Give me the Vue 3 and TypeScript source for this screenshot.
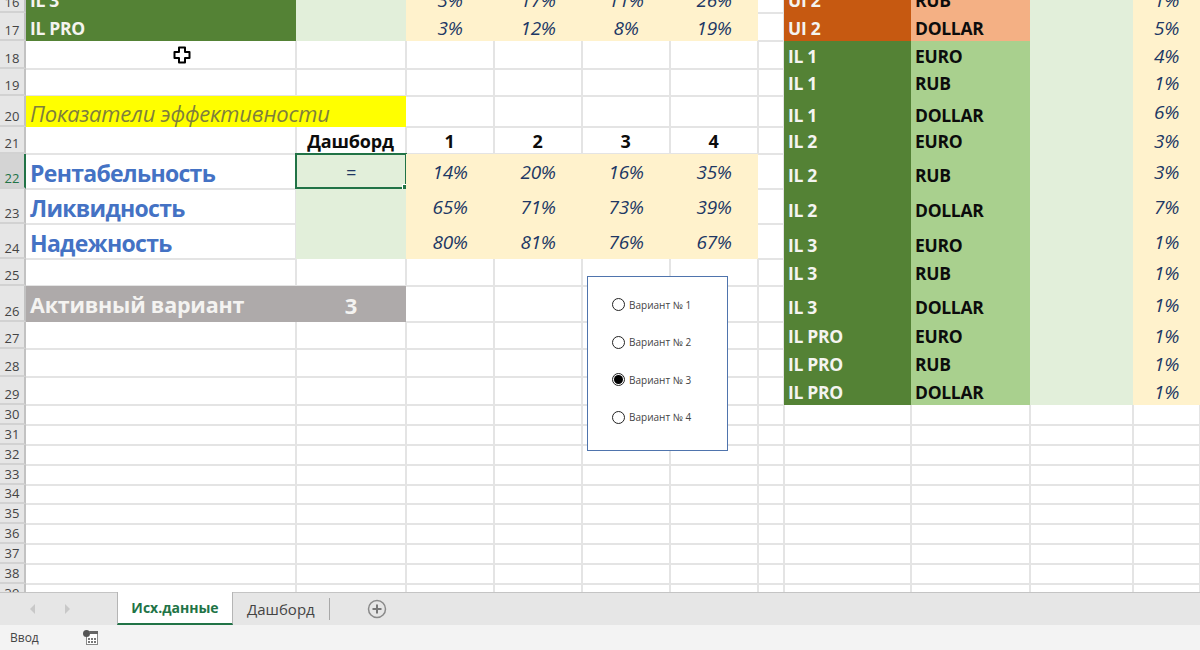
<script setup lang="ts">
interface Cell {
  text?: string;
  cls?: string;
}
interface Row {
  n: number;
  h: number;
  cells: Cell[];
}

const blank = (): Cell => ({});
const pct = (text: string): Cell => ({ text, cls: 'cream pct' });
const pctRow = (v: string[]): Cell[] => v.map(pct);

// right hand table, rows 16..29
const rightData: [string, string, string, string][] = [
  ['UI 2', 'RUB', '1%', 'orange'],
  ['UI 2', 'DOLLAR', '5%', 'orange'],
  ['IL 1', 'EURO', '4%', 'green'],
  ['IL 1', 'RUB', '1%', 'green'],
  ['IL 1', 'DOLLAR', '6%', 'green'],
  ['IL 2', 'EURO', '3%', 'green'],
  ['IL 2', 'RUB', '3%', 'green'],
  ['IL 2', 'DOLLAR', '7%', 'green'],
  ['IL 3', 'EURO', '1%', 'green'],
  ['IL 3', 'RUB', '1%', 'green'],
  ['IL 3', 'DOLLAR', '1%', 'green'],
  ['IL PRO', 'EURO', '1%', 'green'],
  ['IL PRO', 'RUB', '1%', 'green'],
  ['IL PRO', 'DOLLAR', '1%', 'green']
];

const leftData: Record<number, Cell[]> = {
  16: [{ text: 'IL 3', cls: 'dark-green label' }, { cls: 'pale' }, ...pctRow(['3%', '17%', '11%', '26%'])],
  17: [{ text: 'IL PRO', cls: 'dark-green label' }, { cls: 'pale' }, ...pctRow(['3%', '12%', '8%', '19%'])],
  20: [{ text: 'Показатели эффективности', cls: 'yellow wide' }, blank(), blank(), blank(), blank()],
  21: [blank(), { text: 'Дашборд', cls: 'head' }, { text: '1', cls: 'head' }, { text: '2', cls: 'head' }, { text: '3', cls: 'head' }, { text: '4', cls: 'head' }],
  22: [{ text: 'Рентабельность', cls: 'metric' }, { text: '=', cls: 'pale active' }, ...pctRow(['14%', '20%', '16%', '35%'])],
  23: [{ text: 'Ликвидность', cls: 'metric' }, { cls: 'pale' }, ...pctRow(['65%', '71%', '73%', '39%'])],
  24: [{ text: 'Надежность', cls: 'metric' }, { cls: 'pale' }, ...pctRow(['80%', '81%', '76%', '67%'])],
  26: [{ text: 'Активный вариант', cls: 'gray gray-label' }, { text: '3', cls: 'gray gray-num' }, blank(), blank(), blank(), blank()]
};

const heights: Record<number, number> = {
  16: 28, 17: 28, 18: 28, 19: 27, 20: 31, 21: 27, 22: 35,
  23: 35, 24: 35, 25: 27, 26: 36, 27: 27, 28: 28, 29: 28
};

const rows: Row[] = [];
for (let n = 16; n <= 39; n++) {
  const left = leftData[n] ?? [blank(), blank(), blank(), blank(), blank(), blank()];
  const r = rightData[n - 16];
  const h = heights[n] ?? 19.9;
  const low = h > 30 ? ' low' : '';
  const right: Cell[] = r
    ? [
        { text: r[0], cls: (r[3] === 'orange' ? 'dark-orange' : 'dark-green') + ' label' + low },
        { text: r[1], cls: (r[3] === 'orange' ? 'light-orange' : 'light-green') + ' code' + low },
        { cls: 'pale' },
        { text: r[2], cls: 'cream pct' }
      ]
    : [blank(), blank(), blank(), blank()];
  rows.push({ n, h, cells: [...left, blank(), ...right] });
}

const gridRows = rows.map((r) => r.h + 'px').join(' ');
const options = [
  { label: 'Вариант № 1', on: false },
  { label: 'Вариант № 2', on: false },
  { label: 'Вариант № 3', on: true },
  { label: 'Вариант № 4', on: false }
];
</script>

<template>
  <div class="app">
    <div class="sheet">
      <div class="grid" :style="{ gridTemplateRows: gridRows }">
        <template v-for="row in rows" :key="row.n">
          <div class="rowhead" :class="{ selected: row.n === 22 }">{{ row.n }}</div>
          <div v-for="(c, i) in row.cells" :key="i" class="cell" :class="c.cls">
            {{ c.text }}
            <span v-if="c.cls && c.cls.includes('active')" class="handle"></span>
          </div>
        </template>
      </div>

      <svg class="cursor" width="18" height="18" viewBox="0 0 18 18">
        <path d="M6 1.500h6v4.500h4.500v6H12v4.500H6V12H1.500V6H6z" fill="#fff" stroke="#000" stroke-width="2" stroke-linejoin="round" />
      </svg>

      <div class="form">
        <div v-for="o in options" :key="o.label" class="option">
          <span class="radio" :class="{ on: o.on }"></span>
          <span>{{ o.label }}</span>
        </div>
      </div>
    </div>

    <div class="tabs">
      <svg class="nav" width="6" height="10" viewBox="0 0 6 10"><path d="M5 0v10L0 5z" fill="#c8c8c8" /></svg>
      <svg class="nav nav2" width="6" height="10" viewBox="0 0 6 10"><path d="M1 0v10l5-5z" fill="#c8c8c8" /></svg>
      <div class="tab active-tab">Исх.данные</div>
      <div class="tab">Дашборд</div>
      <div class="sep"></div>
      <svg class="plus" width="20" height="20" viewBox="0 0 20 20">
        <circle cx="10" cy="10" r="8.500" fill="none" stroke="#8a8a8a" stroke-width="1.500" />
        <path d="M10 5.500v9M5.500 10h9" stroke="#777" stroke-width="2" />
      </svg>
    </div>

    <div class="status">
      <span class="mode">Ввод</span>
      <svg width="15" height="15" viewBox="0 0 15 15">
        <rect x="3.500" y="1.500" width="11" height="13" fill="#fff" stroke="#888" />
        <path d="M7 1h8v3H7z" fill="#666" />
        <circle cx="3.500" cy="3.500" r="3.500" fill="#555" />
        <path d="M5 8h2v2H5zM8 8h2v2H8zM11 8h2v2h-2zM5 11h2v2H5zM8 11h2v2H8zM11 11h2v2h-2z" fill="#777" />
      </svg>
    </div>
  </div>
</template>

<style>
html,
body {
  margin: 0;
  background: #fff;
}
</style>

<style scoped>
.app {
  width: 1200px;
  height: 650px;
  display: flex;
  flex-direction: column;
  overflow: hidden;
  font-family: "Open Sans", "Noto Sans", sans-serif;
}

.sheet {
  position: relative;
  height: 592px;
  flex: none;
  overflow: hidden;
}

.grid {
  display: grid;
  grid-template-columns: 27px 270px 110px 88px 88px 88px 88px 26px 127px 119px 103px 67px;
  margin: -15px 0 0 -1px;
}

.rowhead {
  background: #e6e6e6;
  border-right: 2px solid #c2c2c2;
  border-bottom: 2px solid #d2d2d2;
  box-sizing: border-box;
  display: flex;
  align-items: flex-end;
  justify-content: center;
  padding-left: 1px;
  font-size: 13px;
  line-height: 17px;
  color: #444;
}

.rowhead.selected {
  background: #d4d4d4;
  color: #217346;
  border-right: 2px solid #217346;
}

.cell {
  box-sizing: border-box;
  border-right: 2px solid #e4e4e4;
  border-bottom: 2px solid #e4e4e4;
  margin: 0 -1px -1px 0;
  display: flex;
  align-items: center;
  justify-content: center;
  position: relative;
  white-space: nowrap;
  min-width: 0;
}

.dark-green,
.dark-orange,
.light-green,
.light-orange,
.pale,
.cream,
.yellow,
.gray {
  margin: 0;
  border: 0;
}

.dark-green {
  background: #548235;
}
.dark-orange {
  background: #c65911;
}
.light-green {
  background: #a9d08e;
}
.light-orange {
  background: #f4b084;
}
.pale {
  background: #e2efda;
}
.cream {
  background: #fff2cc;
}

.label,
.code {
  justify-content: flex-start;
  padding: 1px 0 0 4px;
  font-size: 17.500px;
  font-weight: 700;
  letter-spacing: -0.3px;
}

.low {
  padding-top: 6px;
}

.label {
  color: #f4f4f0;
}

.code {
  color: #0c0c0c;
}

.pct {
  font-size: 19px;
  font-style: italic;
  color: #203764;
  letter-spacing: -0.4px;
  padding-top: 1px;
}

.yellow {
  background: #ffff00;
  justify-content: flex-start;
  padding: 3px 0 0 4px;
  font-size: 22px;
  font-style: italic;
  color: #7f7f3c;
  letter-spacing: -0.2px;
}

.wide {
  grid-column: span 2;
}

.head {
  padding-top: 2px;
  font-size: 18px;
  font-weight: 700;
  color: #0c0c0c;
  letter-spacing: -0.2px;
}

.metric {
  justify-content: flex-start;
  padding: 4px 0 0 4px;
  font-size: 23px;
  font-weight: 700;
  color: #4472c4;
  letter-spacing: -0.7px;
}

.gray {
  background: #aeaaaa;
  color: #f4f3f1;
  font-weight: 700;
  padding-top: 1px;
}

.gray-label {
  justify-content: flex-start;
  padding-left: 4px;
  font-size: 21.500px;
  letter-spacing: -0.2px;
}

.gray-num {
  font-size: 22px;
}

.active {
  border: 2px solid #217346;
  color: #203764;
  font-size: 18px;
  font-style: italic;
  margin: -1px -1px 0 -1px;
  padding-top: 1px;
}

.handle {
  position: absolute;
  right: -4px;
  bottom: -4px;
  width: 5px;
  height: 5px;
  background: #217346;
  border: 1px solid #fff;
}

.cursor {
  position: absolute;
  left: 173px;
  top: 46px;
}

.form {
  position: absolute;
  left: 587px;
  top: 276px;
  width: 141px;
  height: 175px;
  box-sizing: border-box;
  background: #fff;
  border: 1px solid #4f74ad;
  padding: 9px 0 0 24px;
  display: flex;
  flex-direction: column;
  font-size: 10px;
  color: #444;
}

.option {
  height: 37.500px;
  display: flex;
  align-items: center;
  gap: 4px;
}

.radio {
  width: 13px;
  height: 13px;
  box-sizing: border-box;
  border: 1.500px solid #222;
  border-radius: 50%;
  background: #fff;
  position: relative;
}

.radio.on::after {
  content: "";
  position: absolute;
  inset: 1px;
  border-radius: 50%;
  background: #000;
}

.tabs {
  height: 33px;
  flex: none;
  box-sizing: border-box;
  background: #e6e6e6;
  border-top: 1px solid #c4c4c4;
  display: flex;
  align-items: center;
  position: relative;
  padding-left: 117px;
}

.nav {
  position: absolute;
  left: 30px;
  top: 11px;
}

.nav2 {
  left: 64px;
}

.tab {
  height: 100%;
  box-sizing: border-box;
  display: flex;
  align-items: center;
  padding: 0 14px;
  font-size: 15px;
  color: #444;
}

.active-tab {
  width: 116px;
  justify-content: center;
  padding: 0;
  margin-top: -1px;
  height: 33px;
  font-size: 14px;
  background: #fff;
  border-left: 1px solid #b5b5b5;
  border-right: 1px solid #b5b5b5;
  border-bottom: 2px solid #217346;
  color: #217346;
  font-weight: 700;
}

.sep {
  width: 1px;
  height: 22px;
  background: #a8a8a8;
}

.plus {
  margin-left: 37px;
}

.status {
  height: 25px;
  flex: none;
  background: #f3f3f3;
  display: flex;
  align-items: center;
  font-size: 12px;
  color: #444;
}

.mode {
  width: 83px;
  padding-left: 10px;
  box-sizing: border-box;
}
</style>
